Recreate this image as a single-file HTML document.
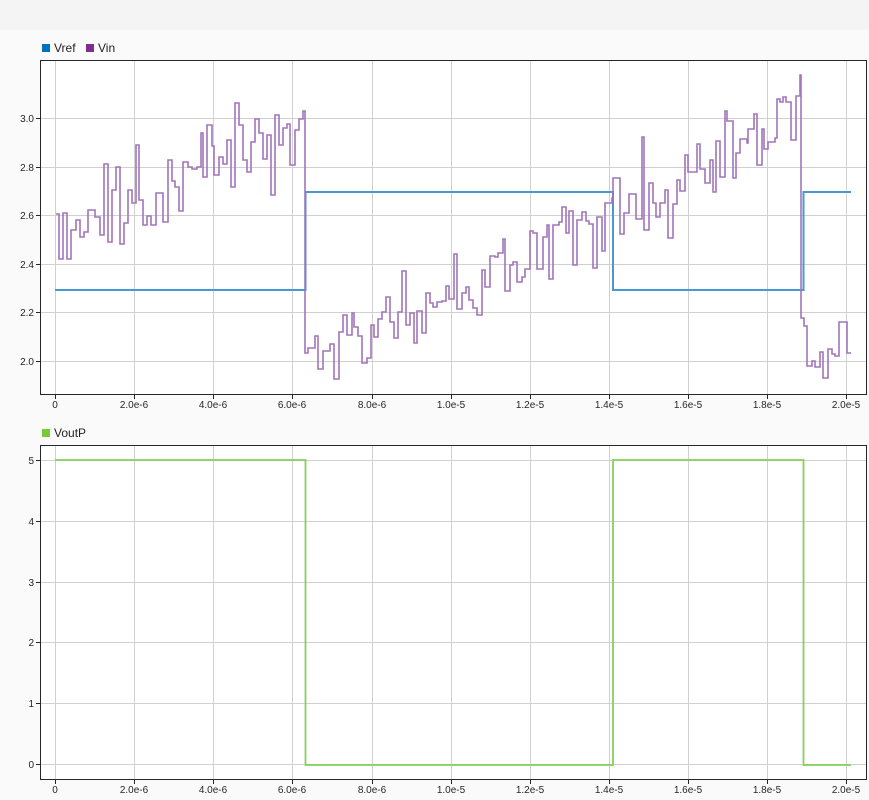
<!DOCTYPE html>
<html><head><style>
html,body{margin:0;padding:0;background:#fafafa;width:869px;height:800px;overflow:hidden}
svg{display:block;font-family:"Liberation Sans",sans-serif}
</style></head><body>
<svg width="869" height="800" xmlns="http://www.w3.org/2000/svg">
<rect x="0" y="0" width="869" height="30" fill="#f4f4f4"/>
<rect x="0" y="30" width="869" height="770" fill="#fafafa"/>
<!-- Plot 1 -->
<rect x="40.5" y="60.5" width="826" height="334" fill="#fff"/>
<g stroke="#d0d0d0" stroke-width="1">
<path d="M55.5 61V394M134.5 61V394M213.5 61V394M292.5 61V394M372.5 61V394M451.5 61V394M530.5 61V394M609.5 61V394M688.5 61V394M767.5 61V394M846.5 61V394"/>
<path d="M41 118.5H866M41 167.5H866M41 215.5H866M41 264.5H866M41 312.5H866M41 361.5H866"/>
</g>
<path d="M55 290H305.5V192H613V290H803.5V192H851" fill="none" stroke="#4a98d2" stroke-width="2"/>
<path fill="none" stroke="#a274bb" stroke-width="1.6" d="M56 214H59V259H63V213H67V259H71V230H76V220H80V237H84V232H88V210H95V217H100V235H104V164H108V242H112V190H116V167H120V244H124V223H128V190H132V203H136V145H139V200H143V225H147V216H151V225H156V193H163V222H168V160H172V181H175V187H179V211H183V162H188V167H192V169H197V167H201V133H203V177H207V125H212V146H214V175H219V157H223V164H227V140H231V187H235V103H239V125H243V160H247V172H251V142H255V119H259V133H263V159H267V135H271V195H275V115H279V145H283V128H287V124H290V165H295V130H299V119H303V111H305V353H308V348H315V336H318V369H323V351H330V344H334V379H339V332H343V315H347V335H352V313H354V327H358V336H362V363H367V358H371V325H374V337H378V319H382V312H386V297H390V322H394V338H398V312H402V271H406V325H410V313H414V343H417V311H422V333H426V293H430V303H433V307H437V302H442V301H446V286H449V299H454V254H457V309H462V293H466V287H469V300H473V308H477V315H482V270H485V287H490V256H495V257H498V253H503V239H505V291H510V265H513V262H517V282H522V277H525V269H530V231H533V233H537V269H543V237H547V225H549V279H553V225H559V222H562V207H566V233H569V211H573V265H577V220H582V212H586V221H589V224H593V268H597V217H602V251H605V203H612V198H613V178H620V234H624V213H629V194H636V219H642V137H644V230H649V183H653V203H656V217H660V203H665V190H668V238H673V204H677V180H680V191H685V155H688V172H697V144H700V169H705V183H710V160H713V192H716V141H720V177H725V111H727V121H733V178H736V153H740V139H747V143H748V129H754V114H757V165H762V129H764V149H768V142H775V138H777V99H780V102H783V97H786V102H791V140H796V96H800V75H801V318H804V326H807V366H812V361H815V367H820V352H823V378H828V349H832V354H835V356H839V322H847V353H851"/>
<rect x="40.5" y="60.5" width="826" height="334" fill="none" stroke="#262626"/>
<g stroke="#262626"><path d="M36 118.5H40M36 167.5H40M36 215.5H40M36 264.5H40M36 312.5H40M36 361.5H40"/>
<path d="M55.5 395V399M134.5 395V399M213.5 395V399M292.5 395V399M372.5 395V399M451.5 395V399M530.5 395V399M609.5 395V399M688.5 395V399M767.5 395V399M846.5 395V399"/></g>
<g font-size="10" fill="#262626" text-anchor="end">
<text x="34" y="122">3.0</text><text x="34" y="171">2.8</text><text x="34" y="219">2.6</text><text x="34" y="268">2.4</text><text x="34" y="316">2.2</text><text x="34" y="365">2.0</text>
</g>
<g font-size="10" fill="#262626" text-anchor="middle">
<text x="55" y="408">0</text><text x="134" y="408">2.0e-6</text><text x="213" y="408">4.0e-6</text><text x="292" y="408">6.0e-6</text><text x="372" y="408">8.0e-6</text><text x="451" y="408">1.0e-5</text><text x="530" y="408">1.2e-5</text><text x="609" y="408">1.4e-5</text><text x="688" y="408">1.6e-5</text><text x="767" y="408">1.8e-5</text><text x="846" y="408">2.0e-5</text>
</g>
<rect x="42" y="44" width="8" height="8" fill="#0072bd"/>
<text x="54" y="52" font-size="12" fill="#222">Vref</text>
<rect x="86" y="44" width="8" height="8" fill="#7e2f8e"/>
<text x="98" y="52" font-size="12" fill="#222">Vin</text>
<!-- Plot 2 -->
<rect x="40.5" y="445.5" width="826" height="334" fill="#fff"/>
<g stroke="#d0d0d0" stroke-width="1">
<path d="M55.5 446V779M134.5 446V779M213.5 446V779M292.5 446V779M372.5 446V779M451.5 446V779M530.5 446V779M609.5 446V779M688.5 446V779M767.5 446V779M846.5 446V779"/>
<path d="M41 460.5H866M41 521.5H866M41 582.5H866M41 642.5H866M41 703.5H866M41 764.5H866"/>
</g>
<path d="M55 460H305.5V765H613V460H803.5V765H851" fill="none" stroke="#85d15a" stroke-width="1.8"/>
<rect x="40.5" y="445.5" width="826" height="334" fill="none" stroke="#262626"/>
<g stroke="#262626"><path d="M36 460.5H40M36 521.5H40M36 582.5H40M36 642.5H40M36 703.5H40M36 764.5H40"/>
<path d="M55.5 780V784M134.5 780V784M213.5 780V784M292.5 780V784M372.5 780V784M451.5 780V784M530.5 780V784M609.5 780V784M688.5 780V784M767.5 780V784M846.5 780V784"/></g>
<g font-size="10" fill="#262626" text-anchor="end">
<text x="34" y="464">5</text><text x="34" y="525">4</text><text x="34" y="586">3</text><text x="34" y="646">2</text><text x="34" y="707">1</text><text x="34" y="768">0</text>
</g>
<g font-size="10" fill="#262626" text-anchor="middle">
<text x="55" y="793">0</text><text x="134" y="793">2.0e-6</text><text x="213" y="793">4.0e-6</text><text x="292" y="793">6.0e-6</text><text x="372" y="793">8.0e-6</text><text x="451" y="793">1.0e-5</text><text x="530" y="793">1.2e-5</text><text x="609" y="793">1.4e-5</text><text x="688" y="793">1.6e-5</text><text x="767" y="793">1.8e-5</text><text x="846" y="793">2.0e-5</text>
</g>
<rect x="42" y="429" width="8" height="8" fill="#77cc33"/>
<text x="54" y="437" font-size="12" fill="#222">VoutP</text>
</svg>
</body></html>
